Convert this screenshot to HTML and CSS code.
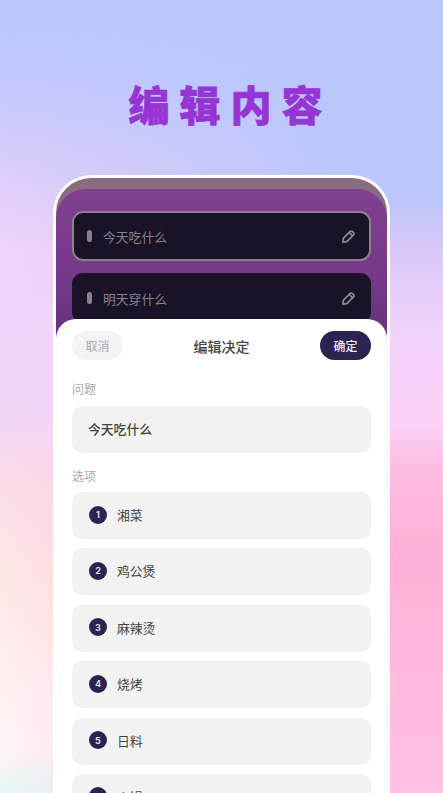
FILE: index.html
```html
<!DOCTYPE html>
<html lang="en">
<head>
    <meta charset="utf-8" />
    <title>编辑内容</title>
    <link rel="stylesheet" href="styles.css">
</head>
<body>
    <div id="container">
        <h1 class="title">编辑内容</h1>
        <div class="phone">
            <div class="screen">
                <div class="card active">
                    <span class="bar"></span>
                    <span class="card-text">今天吃什么</span>
                    <svg class="pen" viewBox="0 0 16 16"><path d="M2 14l.6-4.2 7.2-7.2a1.6 1.6 0 0 1 2.3 0l1.3 1.3a1.6 1.6 0 0 1 0 2.3L6.2 13.400z M9 3.800l3.200 3.200"/></svg>
                </div>
                <div class="card">
                    <span class="bar"></span>
                    <span class="card-text">明天穿什么</span>
                    <svg class="pen" viewBox="0 0 16 16"><path d="M2 14l.6-4.2 7.2-7.2a1.6 1.6 0 0 1 2.3 0l1.3 1.3a1.6 1.6 0 0 1 0 2.3L6.2 13.400z M9 3.800l3.200 3.200"/></svg>
                </div>
            </div>
            <div class="sheet">
                <div class="sheet-head">
                    <button class="cancel">取消</button>
                    <span class="sheet-title">编辑决定</span>
                    <button class="ok">确定</button>
                </div>
                <p class="label">问题</p>
                <div class="field question">今天吃什么</div>
                <p class="label">选项</p>
                <div class="options">
                    <div class="field"><span class="num">1</span>湘菜</div>
                    <div class="field"><span class="num">2</span>鸡公煲</div>
                    <div class="field"><span class="num">3</span>麻辣烫</div>
                    <div class="field"><span class="num">4</span>烧烤</div>
                    <div class="field"><span class="num">5</span>日料</div>
                    <div class="field"><span class="num">6</span>火锅</div>
                </div>
            </div>
        </div>
    </div>
</body>
</html>
```

FILE: styles.css
```css
html,body{
    margin:0;
    height:100%;
    overflow:hidden;
}
#container{
    position:relative;
    height:793px;
    width:443px;
    overflow:hidden;
    box-sizing:border-box;
    padding-top:77px;
    font-family:"Noto Sans CJK SC",sans-serif;
    background:linear-gradient(#b8c8ff 0,#c4c8fd 90px,#d8ccfb 150px,#f0d4fa 250px,#f0d4f8 400px,#fadce8 480px,#fee8e6 580px,#fff2f0 680px,#fff4f4 750px,#e4f8f8 793px);
}
/* right side of the backdrop, faded in over the left one */
#container::before{
    content:"";
    position:absolute;
    inset:0;
    background:linear-gradient(#b8c8ff 0,#bcc6fa 200px,#d8c8f8 250px,#f0d2fa 328px,#fcd0f8 425px,#ffbce2 470px,#ffb0d4 555px,#ffb8dc 656px,#ffc0e4 793px);
    -webkit-mask-image:linear-gradient(to right,transparent 0,#000 330px);
    mask-image:linear-gradient(to right,transparent 0,#000 330px);
}
.title{
    position:relative;
    margin:0 0 45px;
    height:53px;
    line-height:53px;
    text-align:center;
    font-size:41px;
    font-weight:900;
    letter-spacing:10px;
    padding-left:18px;
    color:#9634d4;
    -webkit-text-stroke:.7px #9634d4;
}
.phone{
    position:relative;
    margin-left:53px;
    width:337px;
    height:640px;
    box-sizing:border-box;
    border:3px solid #fff;
    border-bottom:0;
    border-radius:38px 38px 0 0;
    overflow:hidden;
    background:#8a6c82;
    padding-top:11px;
}
.screen{
    height:180px;
    box-sizing:border-box;
    border-radius:30px 30px 0 0;
    background:linear-gradient(#7f4090 0,#7a3a8c 70px,#6a3480 130px);
    padding:22px 16px 0;
    display:flex;
    flex-direction:column;
    gap:12px;
}
.card{
    height:50px;
    flex:none;
    box-sizing:border-box;
    background:#1a1226;
    border-radius:11px;
    display:flex;
    align-items:center;
    padding:0 15px;
    color:#85828b;
    font-size:12.8px;
}
.card.active{
    border:2px solid #8f7f90;
    padding:0 13px;
}
.bar{
    width:5px;
    height:12px;
    border-radius:2.5px;
    background:#85828b;
    margin-right:11px;
}
.card-text{
    flex:1;
}
.pen{
    width:15px;
    height:15px;
    fill:none;
    stroke:#8b8890;
    stroke-width:1.8;
    stroke-linejoin:round;
}
.sheet{
    position:absolute;
    left:0;
    right:0;
    top:141px;
    bottom:0;
    background:#fff;
    border-radius:20px 20px 0 0;
    padding:12px 16px 0;
}
.sheet-head{
    display:flex;
    justify-content:space-between;
    align-items:center;
    height:29px;
    margin-bottom:20px;
}
button{
    width:51px;
    height:29px;
    border:0;
    border-radius:15px;
    padding:0;
    font-family:inherit;
    font-size:12px;
}
.cancel{
    background:#f3f3f4;
    color:#a9a8b0;
}
.ok{
    background:#2d2350;
    color:#eeeef2;
    font-weight:500;
}
.sheet-title{
    font-size:14px;
    font-weight:500;
    color:#444;
}
.label{
    margin:0 0 8px;
    height:18px;
    line-height:18px;
    font-size:12px;
    color:#aaa;
}
.field{
    height:47px;
    flex:none;
    box-sizing:border-box;
    background:#f2f2f2;
    border-radius:10px;
    display:flex;
    align-items:center;
    padding:0 16px 2px;
    font-size:12.8px;
    color:#444;
}
.question{
    margin-bottom:14px;
    font-weight:500;
}
.options{
    display:flex;
    flex-direction:column;
    gap:9.4px;
    margin-top:-1px;
}
.num{
    width:18px;
    height:18px;
    border-radius:50%;
    background:#2d2350;
    color:#ddd;
    font-size:9px;
    font-weight:700;
    font-family:"Inter",sans-serif;
    display:flex;
    align-items:center;
    justify-content:center;
    margin:0 10px 0 1px;
}
```
